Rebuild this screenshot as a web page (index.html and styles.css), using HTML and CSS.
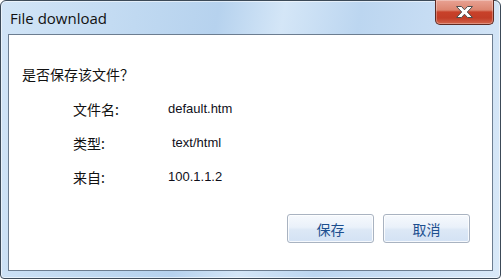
FILE: index.html
```html
<!DOCTYPE html>
<html lang="zh-CN">
<head>
    <meta charset="UTF-8">
    <title>File download</title>
    <link rel="stylesheet" href="styles.css">
</head>
<body>
    <div class="window">
        <div class="titlebar">
            <span class="title">File download</span>
            <button class="close-btn" type="button" aria-label="Close">
                <svg width="19" height="14" viewBox="0 0 19 14">
                    <path d="M1.5 1.5 H6.5 L9.5 4.8 L12.5 1.5 H17.5 L12.3 7 L17.5 12.5 H12.5 L9.5 9.2 L6.5 12.5 H1.5 L6.7 7 Z"
                          fill="#ffffff" stroke="#4e4e4e" stroke-width="1" stroke-linejoin="round"/>
                </svg>
            </button>
        </div>

        <div class="panel">
            <div class="question">是否保存该文件？</div>

            <div class="details">
                <div class="label">文件名:</div>
                <div class="value">default.htm</div>

                <div class="label">类型:</div>
                <div class="value value-shift">text/html</div>

                <div class="label">来自:</div>
                <div class="value">100.1.1.2</div>
            </div>

            <div class="button-group">
                <button type="button" class="btn">保存</button>
                <button type="button" class="btn">取消</button>
            </div>
        </div>
    </div>
</body>
</html>
```

FILE: styles.css
```css
* {
    margin: 0;
    padding: 0;
    box-sizing: border-box;
}

body {
    font-family: "Liberation Sans", "Noto Sans CJK SC", sans-serif;
    background: #ffffff;
    width: 501px;
    height: 279px;
    overflow: hidden;
}

.window {
    width: 501px;
    height: 279px;
    border: 1px solid #3c4a58;
    border-radius: 6px 6px 4px 4px;
    padding: 0 7px 7px 7px;
    display: flex;
    flex-direction: column;
    background: linear-gradient(100deg, #d2e5f7 0%, #c0d9f1 25%, #b6d2ee 40%, #d4e6f7 52%, #bcd6f0 66%, #c9def4 82%, #d9e9f8 100%);
    box-shadow: inset 0 0 0 1px rgba(255, 255, 255, 0.55);
}

.titlebar {
    height: 33px;
    display: flex;
    align-items: flex-start;
}

.title {
    font-family: "Open Sans", "Liberation Sans", sans-serif;
    font-size: 15px;
    line-height: 20px;
    color: #111111;
    padding: 7px 0 0 2px;
}

.close-btn {
    margin-left: auto;
    margin-top: -1px;
    margin-right: -1px;
    width: 59px;
    height: 25px;
    border: 1px solid #5e2a22;
    border-top: none;
    border-radius: 0 0 5px 5px;
    background: linear-gradient(#e8a293 0%, #dc8570 42%, #c8412a 50%, #c23d27 75%, #d2654c 100%);
    box-shadow: inset 0 0 0 1px rgba(255, 255, 255, 0.3);
    display: flex;
    align-items: center;
    justify-content: center;
    cursor: pointer;
}

.close-btn svg {
    display: block;
}

.panel {
    flex: 1;
    background: #ffffff;
    border: 1px solid #6c7d90;
    padding: 0 22px 0 13px;
    display: flex;
    flex-direction: column;
    font-size: 14px;
    color: #111111;
}

.question {
    margin-top: 29px;
    line-height: 20px;
    font-family: "Noto Sans CJK SC", sans-serif;
}

.details {
    margin-top: 15px;
    padding-left: 51px;
    display: grid;
    grid-template-columns: 95px auto;
    row-gap: 14px;
    line-height: 20px;
}

.label {
    font-family: "Noto Sans CJK SC", sans-serif;
    font-size: 14px;
}

.value {
    font-family: "Liberation Sans", sans-serif;
    font-size: 13px;
    color: #0f0f1a;
}

.value-shift {
    padding-left: 4px;
}

.button-group {
    margin-top: 27px;
    display: flex;
    justify-content: flex-end;
    gap: 9px;
}

.btn {
    width: 87px;
    height: 29px;
    border: 1px solid #a9b3c1;
    border-radius: 3px;
    background: linear-gradient(#f6f9fd 0%, #eaf1fa 45%, #dce8f6 55%, #d3e2f4 100%);
    box-shadow: inset 0 0 0 1px rgba(255, 255, 255, 0.8);
    font-family: "Noto Sans CJK SC", sans-serif;
    font-size: 14px;
    color: #1c4f8f;
    cursor: pointer;
}
```
